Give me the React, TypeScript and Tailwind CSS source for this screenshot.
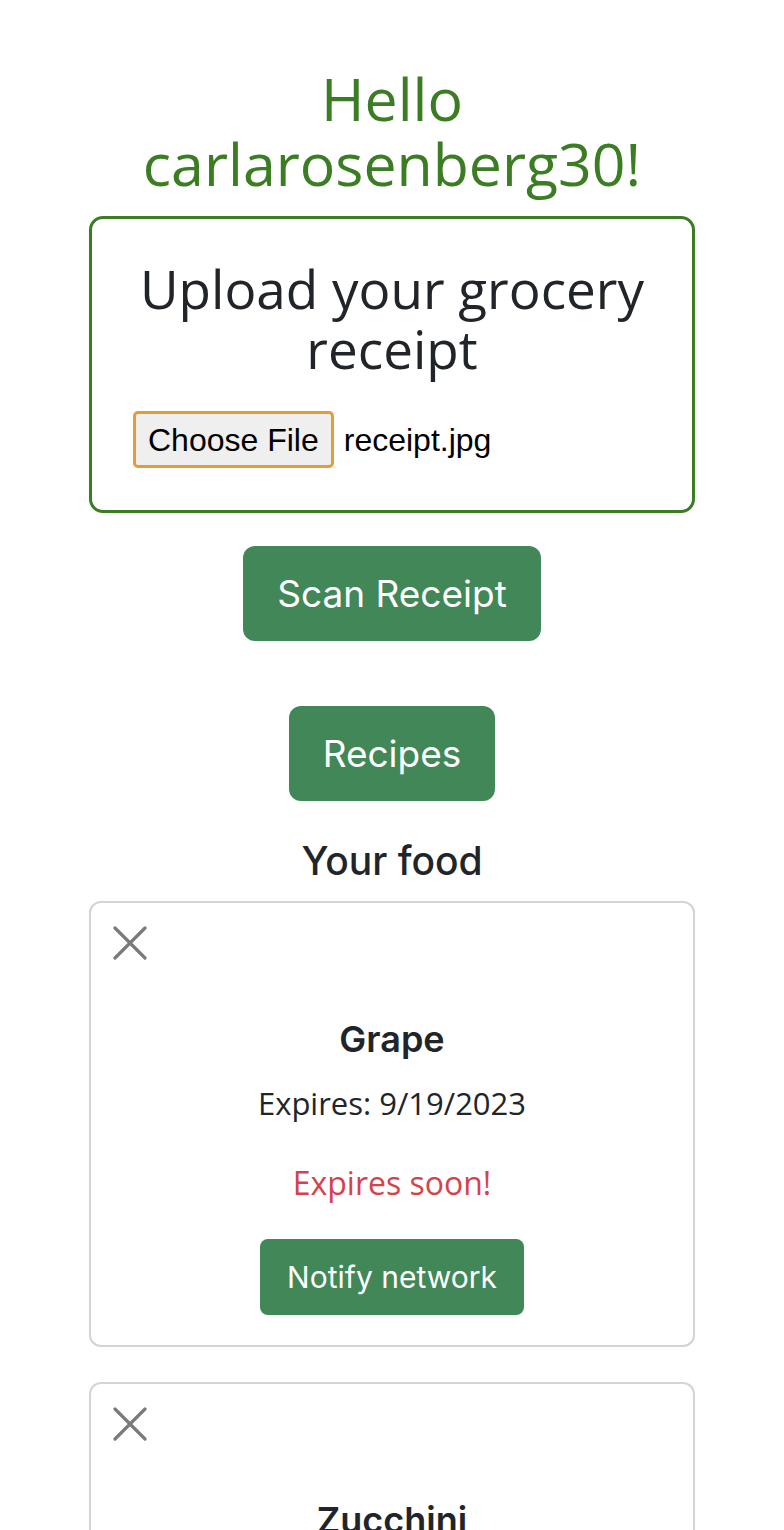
type Food = { name: string; expires: string; soon: boolean };

const foods: Food[] = [
  { name: "Grape", expires: "9/19/2023", soon: true },
  { name: "Zucchini", expires: "9/21/2023", soon: true },
];

const display = "font-['Open_Sans',sans-serif]";
const ui = "font-['Inter',sans-serif]";

function CloseIcon() {
  return (
    <svg width="34" height="34" viewBox="0 0 34 34" fill="none" stroke="currentColor" strokeWidth="3.2" strokeLinecap="round">
      <path d="M2 2L32 32M32 2L2 32" />
    </svg>
  );
}

function FoodCard({ food }: { food: Food }) {
  return (
    <div className="rounded-[12px] border-2 border-[#d4d4d4] bg-white px-[22px] pt-[23px] pb-[30px]">
      <div className="flex">
        <button type="button" aria-label="Remove" className="text-[#7a7a7a]">
          <CloseIcon />
        </button>
      </div>
      <div className="mt-[58px] flex flex-col items-center">
        <h3 className={`${ui} text-[36px] leading-[43px] font-semibold text-[#212529]`}>{food.name}</h3>
        <p className={`${display} mt-[23px] text-[31px] leading-[38px] text-[#212529]`}>
          Expires: {food.expires}
        </p>
        {food.soon && (
          <p className={`${display} mt-[42px] text-[32px] leading-[38px] text-[#d4434c]`}>Expires soon!</p>
        )}
        <button
          type="button"
          className={`${ui} mt-[37px] h-[76px] rounded-[8px] bg-[#418757] px-[27px] text-[30px] text-white`}
        >
          Notify network
        </button>
      </div>
    </div>
  );
}

export default function App() {
  return (
    <div className="min-h-screen bg-white px-[89px] pt-[66px] pb-10">
      <h1 className={`${display} text-center text-[59px] leading-[65px] font-normal text-[#3b7d23]`}>
        Hello carlarosenberg30!
      </h1>

      <div className="mt-[20px] rounded-[14px] border-[3px] border-[#3b7d23] px-[41px] pt-[40px] pb-[42px]">
        <h2 className={`${display} text-center text-[53px] leading-[60px] font-normal text-[#212529]`}>
          Upload your grocery receipt
        </h2>
        <div className="mt-[32px] flex items-center gap-[10px] font-['Liberation_Sans',sans-serif] text-[32px] text-black">
          <span className="flex h-[57px] items-center rounded-[5px] border-[3px] border-[#e09d3a] bg-[#efefef] px-[12px]">
            Choose File
          </span>
          <span>receipt.jpg</span>
        </div>
      </div>

      <div className="mt-[33px] flex flex-col items-center">
        <button
          type="button"
          className={`${ui} h-[95px] rounded-[12px] bg-[#418757] px-[34px] text-[37px] text-white`}
        >
          Scan Receipt
        </button>
        <button
          type="button"
          className={`${ui} mt-[65px] h-[95px] rounded-[12px] bg-[#418757] px-[34px] text-[37px] text-white`}
        >
          Recipes
        </button>
        <h2 className={`${ui} mt-[36px] text-[39px] leading-[47px] font-medium text-[#212529]`}>Your food</h2>
      </div>

      <div className="mt-[17px] flex flex-col gap-[35px]">
        {foods.map((f) => (
          <FoodCard key={f.name} food={f} />
        ))}
      </div>
    </div>
  );
}
